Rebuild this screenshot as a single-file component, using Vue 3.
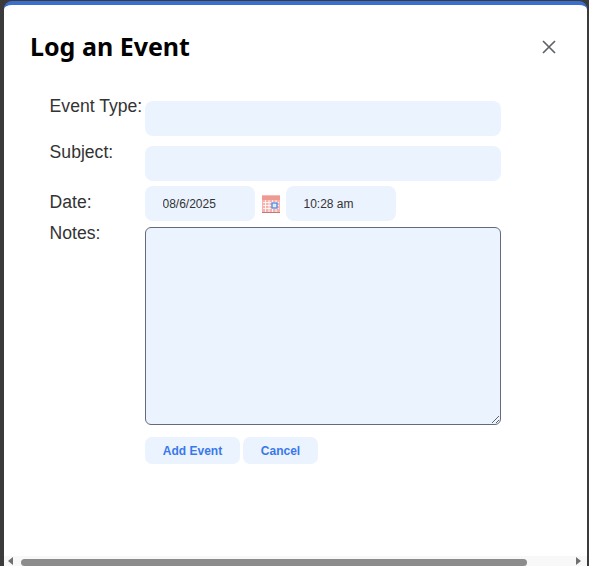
<script setup>
const title = 'Log an Event'
</script>

<template>
  <div class="page">
    <section class="modal">
      <header class="head">
        <h1 class="title">{{ title }}</h1>
        <button class="close" aria-label="Close">
          <svg width="14" height="14" viewBox="0 0 14 14"><path d="M1 1L13 13M13 1L1 13" stroke="#5f6368" stroke-width="1.7" fill="none"/></svg>
        </button>
      </header>
      <form class="form" @submit.prevent>
        <label class="lbl l1">Event Type:</label>
        <input class="field wide" type="text" />
        <label class="lbl l2">Subject:</label>
        <input class="field wide" type="text" />
        <label class="lbl l3">Date:</label>
        <div class="when">
          <input class="field short" type="text" value="08/6/2025" />
          <svg class="cal" width="18" height="18" viewBox="0 0 18 18">
            <rect x="0" y="0.5" width="18" height="17" fill="#f6b3ae"/>
            <rect x="0" y="0.5" width="18" height="4.5" fill="#ee9a93"/>
            <rect x="0" y="17" width="18" height="1" fill="#c27a75"/>
            <path d="M1 7.5H17M1 10.5H17M1 13.5H17M3.5 5V17M7 5V17M10.5 5V17M14 5V17" stroke="#fff3f2" stroke-width="1" fill="none"/>
            <rect x="10" y="8" width="5" height="5" fill="#e4ecfc" stroke="#5a8fe6" stroke-width="1.4"/>
          </svg>
          <input class="field short" type="text" value="10:28 am" />
        </div>
        <label class="lbl l4">Notes:</label>
        <div class="notes">
          <textarea class="area"></textarea>
          <div class="btns">
            <button class="btn add">Add Event</button>
            <button class="btn cancel">Cancel</button>
          </div>
        </div>
      </form>
      <div class="hbar">
        <span class="arrow left"></span>
        <span class="track"><span class="thumb"></span></span>
        <span class="arrow right"></span>
      </div>
    </section>
  </div>
</template>

<style>
html, body { margin: 0; padding: 0; overflow: hidden; }
</style>

<style scoped>
.page {
  width: 589px;
  height: 566px;
  background: #3b3b3b;
  padding: 1px 2px 0 4px;
  box-sizing: border-box;
}
.modal {
  height: 565px;
  background: #fff;
  border-top: 4px solid #3a6fd0;
  border-radius: 8px 8px 0 0;
  box-sizing: border-box;
  display: flex;
  flex-direction: column;
  overflow: hidden;
}
.head {
  display: flex;
  justify-content: space-between;
  align-items: center;
  padding: 23px 31px 1px 26px;
  box-sizing: content-box;
  height: 36px;
}
.title {
  margin: 0;
  font: 700 25px/36px "Noto Sans", sans-serif;
  color: #000;
}
.close {
  border: 0;
  background: none;
  padding: 0;
  width: 14px;
  height: 14px;
  display: flex;
  margin-top: 2px;
}
.form {
  flex: 1;
  display: grid;
  grid-template-columns: 95px 356px;
  grid-template-rows: 35px 35px 35px auto;
  row-gap: 10px;
  padding: 36px 0 0 46px;
  align-content: start;
}
.lbl {
  font: 17.6px/22px "Liberation Sans", Arial, sans-serif;
  color: #333;
  white-space: nowrap;
  margin-left: -0.4px;
}
.l1 { margin-top: -6px; }
.l2 { margin-top: -5px; }
.l4 { margin-top: -14px; }
.field {
  border: 0;
  background: #ebf3ff;
  border-radius: 8px;
  height: 35px;
  box-sizing: border-box;
  padding: 0 17.5px;
  font: 12px "Liberation Sans", Arial, sans-serif;
  color: #333;
  outline: none;
}
.wide { width: 356px; }
.short { width: 110px; }
.when {
  display: flex;
  align-items: center;
  align-self: start;
  gap: 7px;
  margin-top: -5px;
}
.cal { flex: none; margin-right: -1px; }
.notes {
  margin-top: -9px;
  display: flex;
  flex-direction: column;
}
.area {
  width: 356px;
  height: 198px;
  box-sizing: border-box;
  background: #ebf3ff;
  border: 1px solid #646a7c;
  border-radius: 6px;
  outline: none;
  display: block;
}
.btns {
  display: flex;
  gap: 3px;
  margin-top: 12px;
}
.btn {
  height: 27px;
  border: 0;
  border-radius: 7px;
  background: #ebf3ff;
  color: #3a78ea;
  font: 700 12px "Liberation Sans", Arial, sans-serif;
  padding: 0;
}
.add { width: 95px; }
.cancel { width: 75px; }
.hbar {
  height: 10px;
  flex: none;
  background: #f8f8f8;
  display: flex;
  align-items: center;
}
.arrow {
  width: 0;
  height: 0;
  border-top: 4px solid transparent;
  border-bottom: 4px solid transparent;
  flex: none;
}
.left { border-right: 5px solid #6f6f6f; margin-left: 4px; }
.right { border-left: 5px solid #6f6f6f; margin-right: 6px; }
.track { flex: 1; height: 10px; padding-left: 8px; display: block; }
.thumb {
  display: block;
  width: 506px;
  height: 7px;
  margin-top: 3px;
  border-radius: 4px;
  background: #8c8c8c;
}
</style>
